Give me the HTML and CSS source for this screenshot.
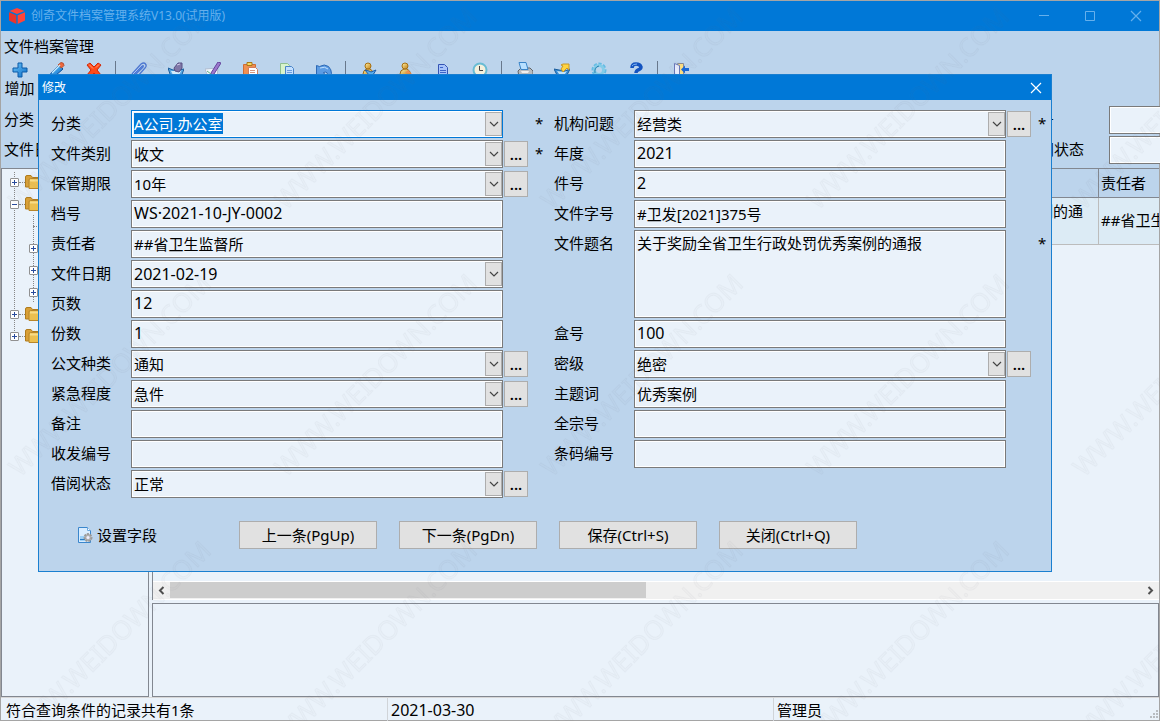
FILE: index.html
```html
<!DOCTYPE html>
<html lang="zh-CN">
<head>
<meta charset="utf-8">
<title>创奇文件档案管理系统V13.0(试用版)</title>
<link rel="stylesheet" href="styles.css">
</head>
<body>
<svg class="defs" aria-hidden="true">
  <defs>
    <symbol id="chevron" viewBox="0 0 10 6"><path d="M1 1l4 4 4-4" fill="none" stroke="#444" stroke-width="1.2"/></symbol>
    <symbol id="close" viewBox="0 0 12 12"><path d="M1 1l10 10M11 1L1 11" fill="none" stroke="currentColor" stroke-width="1.2"/></symbol>
    <symbol id="folder" viewBox="0 0 18 14"><path d="M.500 12V2q0-1.500 1.500-1.500h4l1.500 2H17V12z" fill="#d8a038" stroke="#b07c1c"/><path d="M4 13.500V5q0-1.500 1.500-1.500H18v10z" fill="#ecc050" stroke="#b8862a"/><path d="M5 4.500h13v2H5z" fill="#f8dc88"/></symbol>
    <linearGradient id="blue" x1="0" y1="0" x2="1" y2="1"><stop offset="0" stop-color="#6cc4f8"/><stop offset="1" stop-color="#0a6cc8"/></linearGradient>
    <linearGradient id="gold" x1="0" y1="0" x2="1" y2="1"><stop offset="0" stop-color="#fff2a8"/><stop offset="1" stop-color="#c47f10"/></linearGradient>
  </defs>
</svg>

<div class="app">
  <header class="titlebar">
    <svg class="logo" viewBox="0 0 16 16"><path d="M8 0l7.500 3L8 6 .500 3z" fill="#ff4438"/><path d="M0 4.300l7.300 3V16L0 12.500z" fill="#e8342c"/><path d="M16 4.300l-7.300 3V16l7.300-3.500z" fill="#ff4438"/></svg>
    <h1 class="app-title">创奇文件档案管理系统V13.0(试用版)</h1>
    <div class="window-buttons">
      <button class="window-button" aria-label="最小化"><svg viewBox="0 0 12 12"><path d="M1 5.500h10" stroke="currentColor"/></svg></button>
      <button class="window-button" aria-label="最大化"><svg viewBox="0 0 12 12"><path d="M1.500 1.500h9v9h-9z" fill="none" stroke="currentColor"/></svg></button>
      <button class="window-button" aria-label="关闭"><svg><use href="#close"/></svg></button>
    </div>
  </header>

  <div class="menu">文件档案管理</div>
  <nav class="toolbar">
    <button class="tool"><svg viewBox="0 0 16 16"><path d="M6 1h4v5h5v4h-5v5H6v-5H1V6h5z" fill="url(#blue)" stroke="#0a5aa8"/></svg>增加</button>
    <button class="tool" aria-label="修改"><svg viewBox="0 0 16 16"><path d="M1 15l1-4 8-8 4 4-8 7z" fill="url(#blue)" stroke="#0b4f9c"/><path d="M9 3l3-2.500q3 0 3 3L12.500 6z" fill="#f0683c" stroke="#b85030"/><path d="M3 11l8-8" stroke="#c8ecff" stroke-width="1.500"/></svg></button>
    <button class="tool" aria-label="删除"><svg viewBox="0 0 16 16"><path d="M4 1l4 4 4-4 3 2-4 5 4 5-3 2-4-4-4 4-3-2 4-5-4-5z" fill="#ff4a18" stroke="#d02808"/><path d="M3 2.500l4 4M13 2.500l-3 3" stroke="#ff9c78"/></svg></button>
    <span class="separator"></span>
    <button class="tool" aria-label="附件"><svg viewBox="0 0 16 16"><path d="M1 12l9-10q3-2 4.500 0T14 6l-8 9M4 13l8-8q1-2-1-1l-8 8" fill="none" stroke="#4d78d4" stroke-width="1.300"/><path d="M2 12l9-9" stroke="#a8c4f4"/></svg></button>
    <button class="tool" aria-label="归档"><svg viewBox="0 0 16 16"><path d="M0 6l5 2h6l5-1-3 8H3z" fill="#58a8e4" stroke="#195c9c"/><path d="M3 9h10l-2 4H5z" fill="#d4ecfa"/><path d="M6 6l4-5h4v5l-3 4-4-1z" fill="#8078a8" stroke="#585084"/><path d="M9 3l3-1" stroke="#d0c8e8"/></svg></button>
    <button class="tool" aria-label="签字"><svg viewBox="0 0 16 16"><path d="M0 7l13-1-1 9H3z" fill="#f0f6fc" stroke="#b0bcd0"/><path d="M13 0l3 1-7 11-3 2V11z" fill="#9b78cc" stroke="#64449c"/><path d="M2 9l4 3" stroke="#60b080"/></svg></button>
    <button class="tool" aria-label="粘贴"><svg viewBox="0 0 16 16"><path d="M1.500 2.500h12v13h-12z" fill="#f09050" stroke="#d06c34"/><path d="M5 .500h5v3H5z" fill="#f8d860" stroke="#a87818"/><path d="M6.500 5.500h7l2 2v8h-9z" fill="#fff" stroke="#d07c5c"/><path d="M8 8.500h5M8 10.500h5" stroke="#d89880"/></svg></button>
    <button class="tool" aria-label="复制"><svg viewBox="0 0 16 16"><path d="M1.500 1.500h7l2 2v11h-9z" fill="#d8f4cc" stroke="#90c090"/><path d="M6.500 4.500h6l2 2v9h-8z" fill="#c4e0ff" stroke="#4a84c8"/><path d="M8 8.500h5M8 10.500h5" stroke="#6a9ee0"/></svg></button>
    <button class="tool" aria-label="撤销"><svg viewBox="0 0 16 16"><path d="M.500 3.500l3 1q5-3 9 0 3 3 3 7v4h-4q1-7-4-5l2 3H.500z" fill="#5c9ce4" stroke="#2c68b4"/><path d="M4 6q5-2 8 1" fill="none" stroke="#c0e0ff"/></svg></button>
    <span class="separator"></span>
    <button class="tool" aria-label="借阅"><svg viewBox="0 0 16 16"><path d="M2 12q0-4 4-5h3q3 1 4 6H2z" fill="url(#gold)" stroke="#9a6818"/><circle cx="7" cy="4" r="3" fill="url(#gold)" stroke="#a87010"/><path d="M4 8l4 1 2 1 5-2-3 5H8z" fill="#5ab0f0" stroke="#1a5cac"/></svg></button>
    <button class="tool" aria-label="归还"><svg viewBox="0 0 16 16"><path d="M2 12q0-4 4-5h3q3 1 4 6H2z" fill="url(#gold)" stroke="#9a6818"/><circle cx="7" cy="4" r="3" fill="url(#gold)" stroke="#a87010"/><path d="M7 11l3-3 4 4z" fill="#f49050"/></svg></button>
    <button class="tool" aria-label="文档"><svg viewBox="0 0 16 16"><path d="M3.500 2.500h6l3 3v10h-9z" fill="#a8c4fa" stroke="#3454b4"/><path d="M5 5.500h3M5 8.500h6M5 10.500h6" stroke="#3c64c8"/></svg></button>
    <button class="tool" aria-label="时间"><svg viewBox="0 0 16 16"><circle cx="8" cy="8" r="6.500" fill="#f4f0dc" stroke="#68bcd4" stroke-width="2"/><path d="M7.500 4v4.500H11" fill="none" stroke="#444"/></svg></button>
    <span class="separator"></span>
    <button class="tool" aria-label="打印"><svg viewBox="0 0 16 16"><path d="M1 9l3-3h9l3 3v6H2z" fill="#b8bcc0" stroke="#606468"/><path d="M2 .500h7l2 7H4z" fill="#b8e0ff" stroke="#3a84c8"/><path d="M4 9h8l-1 2H5z" fill="#eee"/></svg></button>
    <button class="tool" aria-label="导出"><svg viewBox="0 0 16 16"><path d="M0 7l5 1 6 1 5-2-4 8H4z" fill="#3990d8" stroke="#195c9c"/><path d="M3 9l7 1 3-1-2 3H5z" fill="#c4e4f8"/><path d="M7 3l2-1h6v6l-2-2-4 4-2-3 2-3z" fill="#ffd440" stroke="#c89828"/></svg></button>
    <button class="tool" aria-label="设置"><svg viewBox="0 0 16 16"><circle cx="8" cy="8" r="6" fill="none" stroke="#64bce4" stroke-width="3" stroke-dasharray="3 1.500"/><circle cx="8" cy="8" r="4.500" fill="none" stroke="#84cce8" stroke-width="3"/><path d="M4 11q-1-6 4-7" fill="none" stroke="#2880b0"/></svg></button>
    <button class="tool" aria-label="帮助"><svg viewBox="0 0 16 16"><path d="M4 6q0-4 4-4t5 3q0 2-3 3-2 1-2 3" fill="none" stroke="#1454c0" stroke-width="3.500"/><path d="M4 4q1-2 5-2" fill="none" stroke="#80b4f4"/><circle cx="8" cy="14" r="1.500" fill="#1454c0"/></svg></button>
    <span class="separator"></span>
    <button class="tool" aria-label="退出"><svg viewBox="0 0 16 16"><path d="M4.500 1.500h6v13h-6z" fill="#ffe080" stroke="#8c8c94"/><path d="M1.500 1.500l5 2v12l-5-2z" fill="#e8ecfc" stroke="#6878b8"/><path d="M8 7.500l4-4V6h4v3h-4v2.500z" fill="#1868d8"/></svg></button>
  </nav>

  <div class="filters">
    <span class="filter-label">分类</span>
    <label class="filter-label" for="q-no">件号</label>
    <input class="field" id="q-no">
    <span class="filter-label">文件日期</span>
    <label class="filter-label" for="q-state">借阅状态</label>
    <input class="field" id="q-state">
  </div>

  <main class="workspace">
    <aside class="tree-panel">
      <ul class="tree">
        <li class="node"><span class="row"><i class="expander"></i><i class="link"></i><svg><use href="#folder"/></svg></span></li>
        <li class="node"><span class="row"><i class="expander open"></i><i class="link"></i><svg><use href="#folder"/></svg></span>
          <ul class="subtree">
            <li class="row"><i class="tick"></i></li>
            <li class="row"><i class="expander"></i></li>
            <li class="row"><i class="expander"></i></li>
            <li class="row"><i class="expander"></i></li>
          </ul>
        </li>
        <li class="node"><span class="row"><i class="expander"></i><i class="link"></i><svg><use href="#folder"/></svg></span></li>
        <li class="node"><span class="row"><i class="expander"></i><i class="link"></i><svg><use href="#folder"/></svg></span></li>
      </ul>
    </aside>
    <section class="content">
      <div class="grid-panel">
        <div class="grid-body">
          <table class="records">
            <colgroup><col class="col-lead"><col class="col-name"><col class="col-owner"></colgroup>
            <thead><tr><th></th><th>文件题名</th><th>责任者</th></tr></thead>
            <tbody><tr><td></td><td>关于奖励全省卫生行政处罚优秀案例的通报</td><td>##省卫生监督所</td></tr></tbody>
          </table>
        </div>
        <div class="scrollbar">
          <svg class="scroll-arrow" viewBox="0 0 17 17"><path d="M10.500 5L7 8.500l3.500 3.500" fill="none" stroke="#505050" stroke-width="2"/></svg>
          <div class="scroll-track"><div class="scroll-thumb"></div></div>
          <svg class="scroll-arrow" viewBox="0 0 17 17"><path d="M6.500 5L10 8.500 6.500 12" fill="none" stroke="#505050" stroke-width="2"/></svg>
        </div>
      </div>
      <div class="detail-panel"></div>
    </section>
  </main>

  <footer class="statusbar">
    <span class="status">符合查询条件的记录共有1条</span>
    <span class="status latin">2021-03-30</span>
    <span class="status">管理员</span>
    <svg class="grip" viewBox="0 0 9 9"><path d="M7 0h2v2H7zM7 3h2v2H7zM4 3h2v2H4zM7 6h2v2H7zM4 6h2v2H4zM1 6h2v2H1z" fill="#b8bcc0"/></svg>
  </footer>
</div>

<form class="dialog" role="dialog" aria-labelledby="dialog-title">
  <header class="dialog-bar">
    <h2 class="dialog-title" id="dialog-title">修改</h2>
    <button type="button" class="dialog-close" aria-label="关闭"><svg><use href="#close"/></svg></button>
  </header>
  <div class="columns">
    <div class="group group-left">
      <label for="f1">分类</label>
      <span class="combo"><input class="field" id="f1" value="A公司.办公室"><span class="arrow"><svg><use href="#chevron"/></svg></span></span>
      <span class="star">*</span>
      <label for="f2">文件类别</label>
      <span class="combo"><select class="field" id="f2"><option>收文</option></select><span class="arrow"><svg><use href="#chevron"/></svg></span></span>
      <button type="button" class="more">...</button>
      <span class="star">*</span>
      <label for="f3">保管期限</label>
      <span class="combo"><select class="field" id="f3"><option>10年</option></select><span class="arrow"><svg><use href="#chevron"/></svg></span></span>
      <button type="button" class="more">...</button>
      <label for="f4">档号</label>
      <input class="field latin" id="f4" value="WS·2021-10-JY-0002">
      <label for="f5">责任者</label>
      <input class="field" id="f5" value="##省卫生监督所">
      <label for="f6">文件日期</label>
      <span class="combo"><select class="field latin" id="f6"><option>2021-02-19</option></select><span class="arrow"><svg><use href="#chevron"/></svg></span></span>
      <label for="f7">页数</label>
      <input class="field latin" id="f7" value="12">
      <label for="f8">份数</label>
      <input class="field latin" id="f8" value="1">
      <label for="f9">公文种类</label>
      <span class="combo"><select class="field" id="f9"><option>通知</option></select><span class="arrow"><svg><use href="#chevron"/></svg></span></span>
      <button type="button" class="more">...</button>
      <label for="f10">紧急程度</label>
      <span class="combo"><select class="field" id="f10"><option>急件</option></select><span class="arrow"><svg><use href="#chevron"/></svg></span></span>
      <button type="button" class="more">...</button>
      <label for="f11">备注</label>
      <input class="field" id="f11">
      <label for="f12">收发编号</label>
      <input class="field" id="f12">
      <label for="f13">借阅状态</label>
      <span class="combo"><select class="field" id="f13"><option>正常</option></select><span class="arrow"><svg><use href="#chevron"/></svg></span></span>
      <button type="button" class="more">...</button>
    </div>
    <div class="group group-right">
      <label for="g1">机构问题</label>
      <span class="combo"><select class="field" id="g1"><option>经营类</option></select><span class="arrow"><svg><use href="#chevron"/></svg></span></span>
      <button type="button" class="more">...</button>
      <span class="star">*</span>
      <label for="g2">年度</label>
      <input class="field latin" id="g2" value="2021">
      <label for="g3">件号</label>
      <input class="field latin" id="g3" value="2">
      <label for="g4">文件字号</label>
      <input class="field" id="g4" value="#卫发[2021]375号">
      <label class="tall" for="g5">文件题名</label>
      <textarea class="field tall" id="g5">关于奖励全省卫生行政处罚优秀案例的通报</textarea>
      <span class="star tall">*</span>
      <label for="g6">盒号</label>
      <input class="field latin" id="g6" value="100">
      <label for="g7">密级</label>
      <span class="combo"><select class="field" id="g7"><option>绝密</option></select><span class="arrow"><svg><use href="#chevron"/></svg></span></span>
      <button type="button" class="more">...</button>
      <label for="g8">主题词</label>
      <input class="field" id="g8" value="优秀案例">
      <label for="g9">全宗号</label>
      <input class="field" id="g9">
      <label for="g10">条码编号</label>
      <input class="field" id="g10">
    </div>
  </div>
  <div class="actions">
    <button type="button" class="setup"><svg viewBox="0 0 16 16"><path d="M1.500.500h9l3 3v12h-12z" fill="#d8ecff" stroke="#3a86cc"/><path d="M3 9h5v5H3z" fill="#9cd0f8"/><path d="M3 12.500h5" stroke="#2c7cc4"/><path d="M10.500.500v3h3" fill="#fff" stroke="#6aa8e0"/><circle cx="11" cy="10.500" r="3.500" fill="#b4b4b4" stroke="#999" stroke-width="2" stroke-dasharray="2 1"/><circle cx="11" cy="10.500" r="1.500" fill="#eef"/></svg>设置字段</button>
    <button type="button" class="action">上一条(PgUp)</button>
    <button type="button" class="action">下一条(PgDn)</button>
    <button type="button" class="action">保存(Ctrl+S)</button>
    <button type="button" class="action">关闭(Ctrl+Q)</button>
  </div>
</form>

<svg class="watermark" aria-hidden="true">
  <defs>
    <pattern id="mark" width="266" height="267" patternUnits="userSpaceOnUse">
      <text class="mark-text" transform="translate(20 211) rotate(-45)">WWW.WEIDOWN.COM</text>
    </pattern>
  </defs>
  <rect width="100%" height="100%" fill="url(#mark)"/>
</svg>
<script>
  document.getElementById("f1").select();
</script>
</body>
</html>
```
FILE: styles.css
```css
* { box-sizing: border-box; }

body {
  margin: 0;
  font: 15px/20px "Noto Sans", "Noto Sans CJK SC", sans-serif;
  color: #000;
  overflow: hidden;
}

h1, h2, ul { margin: 0; padding: 0; font-weight: normal; list-style: none; }

button, input, select, textarea { font: inherit; color: inherit; margin: 0; }

button { padding: 0; border: 0; background: none; }

.defs { position: absolute; width: 0; height: 0; }

.latin { font-size: 16px; }

.app {
  display: flex;
  flex-direction: column;
  height: 100vh;
  border: 1px solid #a5a5a5;
  background: #bcd4ec;
}

.titlebar {
  display: flex;
  align-items: center;
  height: 30px;
  padding-left: 8px;
  background: #0078d7;
  color: #66b0ec;
}
.logo { width: 16px; height: 16px; margin-right: 6px; }
.app-title { flex: 1; font-size: 12px; }
.window-buttons { display: flex; }
.window-button { width: 46px; height: 28px; }
.window-button svg { display: block; width: 12px; height: 12px; margin: auto; }

.menu { padding: 5px 3px 0; height: 30px; }

.toolbar { display: flex; height: 42px; }
.tool {
  display: flex;
  flex-direction: column;
  align-items: center;
  width: 37px;
}
.tool svg { flex: none; width: 16px; height: 16px; margin-top: 1px; }
.separator { width: 1px; height: 36px; margin: 0 4px 0 3px; background: #68788c; }

.filters {
  display: grid;
  grid-template-columns: 1fr 85px 50px;
  gap: 2px 0;
  padding: 3px 0 4px 3px;
}
.filters .field { width: 60px; }
.filter-label { line-height: 26px; }

.field {
  display: block;
  width: 100%;
  height: 28px;
  padding: 0 2px;
  border: 1px solid #7a7a7a;
  border-radius: 0;
  outline: 0;
  background: #eaf2fa;
  box-shadow: inset 0 0 0 1px #fff;
  appearance: none;
}
input.field { padding-bottom: 2px; }
select.field { padding-bottom: 3px; }
.field:focus { border-color: #0078d7; }
.field::selection { background: #0078d7; color: #fff; }

.workspace { flex: 1; display: flex; gap: 3px; min-height: 0; background: #eaf2fa; }

.tree-panel {
  flex: none;
  width: 148px;
  padding: 2px 0 0 8px;
  border: 1px solid #828790;
}
.tree { background: linear-gradient(#888 50%, transparent 50%) 4px 11px / 1px 2px repeat-y; height: 166px; }
.row { display: flex; align-items: center; height: 22px; }
.row svg { flex: none; width: 18px; height: 14px; }
.link { width: 6px; border-top: 1px dotted #888; }
.expander {
  width: 9px;
  height: 9px;
  border: 1px solid #919191;
  border-radius: 1px;
  background:
    linear-gradient(#2a4c9c, #2a4c9c) center / 5px 1px no-repeat,
    linear-gradient(#2a4c9c, #2a4c9c) center / 1px 5px no-repeat,
    #fff;
}
.expander.open { background: linear-gradient(#2a4c9c, #2a4c9c) center / 5px 1px no-repeat, #fff; }
.subtree { margin-left: 19px; background: linear-gradient(#888 50%, transparent 50%) 4px 0 / 1px 2px repeat-y; }
.tick { width: 8px; margin-left: 4px; border-top: 1px dotted #888; }

.content { flex: 1; min-width: 0; display: flex; flex-direction: column; gap: 3px; }
.grid-panel {
  flex: 1;
  min-height: 0;
  display: flex;
  flex-direction: column;
  border: solid #828790;
  border-width: 1px 0 0 1px;
}
.grid-body { flex: 1; overflow: hidden; }
.records { table-layout: fixed; width: 1100px; border-collapse: separate; border-spacing: 0; }
.col-lead { width: 658px; }
.col-name { width: 288px; }
.records th, .records td { padding: 0 8px 0 2px; text-align: left; font-weight: normal; }
.records th { height: 29px; background: #bcd4ec; border: solid #828790; border-width: 0 1px 1px 0; }
.records td { height: 47px; padding-bottom: 2px; line-height: 18px; background: #dcebf5; border: solid #bcbcbc; border-width: 0 1px 1px 0; }

.scrollbar { display: flex; height: 19px; border: solid #fff; border-width: 1px 0; background: #f0f0f0; }
.scroll-arrow { width: 17px; height: 17px; }
.scroll-track { flex: 1; }
.scroll-thumb { width: 49%; height: 16px; background: #cdcdcd; }
.detail-panel { flex: none; height: 94px; border: 1px solid #828790; }

.statusbar {
  position: relative;
  display: grid;
  grid-template-columns: 1fr 1fr 1fr;
  height: 23px;
  border-top: 1px solid #d7d7d7;
  background: #eaf2fa;
}
.status { padding: 0 5px; line-height: 24px; }
.status + .status { border-left: 1px solid #d0d4d8; padding-left: 3px; }
.grip { position: absolute; right: 1px; bottom: 1px; width: 9px; height: 9px; }

.dialog {
  position: absolute;
  top: 74px;
  left: 38px;
  right: 108px;
  border: 1px solid #1a7fd0;
  background: #bcd4ec;
}
.dialog-bar {
  display: flex;
  align-items: center;
  justify-content: space-between;
  height: 25px;
  padding: 0 9px 0 3px;
  background: #0078d7;
  color: #fff;
}
.dialog-title { font-size: 12px; }
.dialog-close { width: 12px; height: 12px; }
.dialog-close svg { display: block; width: 12px; height: 12px; }

.columns { display: flex; padding: 10px 6px 0 12px; }
.group { display: grid; grid-auto-rows: 28px; row-gap: 2px; line-height: 26px; align-content: start; }
.group-left { flex: 1 1 131px; grid-template-columns: 80px 1fr 25px 26px; }
.group-right { flex: 1 1 119px; grid-template-columns: 80px 1fr 25px 14px; }
.group label { grid-column: 1; }
.group .combo, .group > .field { grid-column: 2; }
.group .tall { grid-row: span 3; }
textarea.field { height: 88px; padding: 1px 2px; line-height: 22px; resize: none; }

.combo { position: relative; }
.combo .field { padding-right: 20px; }
.arrow {
  position: absolute;
  top: 2px;
  right: 1px;
  display: flex;
  align-items: center;
  justify-content: center;
  width: 17px;
  height: 24px;
  border: 1px solid #adadad;
  background: #e1e1e1;
  pointer-events: none;
}
.arrow svg { width: 10px; height: 6px; }

.more {
  grid-column: 3;
  width: 24px;
  height: 26px;
  margin: 1px 0 0 1px;
  border: 1px solid #adadad;
  background: #e1e1e1;
  font-weight: 600;
  line-height: 24px;
}
.star { grid-column: 4; padding-left: 7px; }

.actions { display: flex; align-items: center; gap: 22px; padding: 23px 12px 22px 38px; }
.setup { display: flex; align-items: center; gap: 4px; width: 140px; }
.setup svg { width: 16px; height: 16px; }
.action { width: 138px; height: 28px; border: 1px solid #adadad; background: #e1e1e1; }

.watermark { position: absolute; top: 0; left: 0; width: 100%; height: 100%; pointer-events: none; }
.mark-text { font: 26px "Noto Sans", sans-serif; fill: rgba(90, 100, 120, 0.02); stroke: rgba(70, 80, 100, 0.04); stroke-width: 1px; }
```
